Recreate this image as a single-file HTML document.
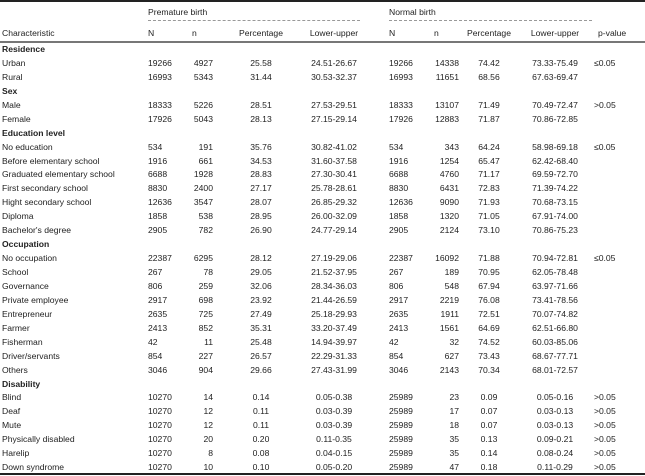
<!DOCTYPE html>
<html><head><meta charset="utf-8"><style>
body{margin:0;width:645px;height:476px;background:#fff;font-family:"Liberation Sans",sans-serif;font-size:8.6px;color:#222;position:relative;overflow:hidden}
.top{position:absolute;left:0;top:0;width:645px;height:2px;background:#222}
.bot{position:absolute;left:0;top:473px;width:645px;height:2px;background:#222}
.hl{position:absolute;left:0;top:41px;width:645px;height:2px;background:#777}
.g{position:absolute;top:7px}
.d{position:absolute;top:20px;height:0;border-top:1px dashed #999}
table{position:absolute;left:0;border-collapse:collapse;table-layout:fixed;width:645px}
td{padding:0;height:13.93px;line-height:13.93px;white-space:nowrap;overflow:visible}
td:nth-child(1){padding-left:2px}
td:nth-child(2){padding-left:2px}
td:nth-child(3){text-align:right;padding-right:3px}
td:nth-child(4),td:nth-child(5),td:nth-child(8),td:nth-child(9){text-align:center}
td:nth-child(6){padding-left:27px}
td:nth-child(7){text-align:right;padding-right:2px}
td:nth-child(10){padding-left:1px}
tr.s td{font-weight:bold}
</style></head><body>
<div class="top"></div>
<div class="g" style="left:148px">Premature birth</div>
<div class="g" style="left:389px">Normal birth</div>
<div class="d" style="left:148px;width:212px"></div>
<div class="d" style="left:389px;width:203px"></div>
<table style="top:27px"><colgroup><col style="width:146px"><col style="width:40px"><col style="width:30px"><col style="width:90px"><col style="width:56px"><col style="width:64px"><col style="width:35px"><col style="width:56px"><col style="width:76px"><col style="width:52px"></colgroup>
<tr><td>Characteristic</td><td>N</td><td style="text-align:left;padding-left:6px">n</td><td>Percentage</td><td>Lower-upper</td><td>N</td><td style="text-align:left;padding-left:8px">n</td><td>Percentage</td><td>Lower-upper</td><td style="padding-left:5px">p-value</td></tr></table>
<div class="hl"></div>
<table style="top:43px"><colgroup><col style="width:146px"><col style="width:40px"><col style="width:30px"><col style="width:90px"><col style="width:56px"><col style="width:64px"><col style="width:35px"><col style="width:56px"><col style="width:76px"><col style="width:52px"></colgroup>
<tr class="s"><td>Residence</td><td></td><td></td><td></td><td></td><td></td><td></td><td></td><td></td><td></td></tr>
<tr><td>Urban</td><td>19266</td><td>4927</td><td>25.58</td><td>24.51-26.67</td><td>19266</td><td>14338</td><td>74.42</td><td>73.33-75.49</td><td>≤0.05</td></tr>
<tr><td>Rural</td><td>16993</td><td>5343</td><td>31.44</td><td>30.53-32.37</td><td>16993</td><td>11651</td><td>68.56</td><td>67.63-69.47</td><td></td></tr>
<tr class="s"><td>Sex</td><td></td><td></td><td></td><td></td><td></td><td></td><td></td><td></td><td></td></tr>
<tr><td>Male</td><td>18333</td><td>5226</td><td>28.51</td><td>27.53-29.51</td><td>18333</td><td>13107</td><td>71.49</td><td>70.49-72.47</td><td>&gt;0.05</td></tr>
<tr><td>Female</td><td>17926</td><td>5043</td><td>28.13</td><td>27.15-29.14</td><td>17926</td><td>12883</td><td>71.87</td><td>70.86-72.85</td><td></td></tr>
<tr class="s"><td>Education level</td><td></td><td></td><td></td><td></td><td></td><td></td><td></td><td></td><td></td></tr>
<tr><td>No education</td><td>534</td><td>191</td><td>35.76</td><td>30.82-41.02</td><td>534</td><td>343</td><td>64.24</td><td>58.98-69.18</td><td>≤0.05</td></tr>
<tr><td>Before elementary school</td><td>1916</td><td>661</td><td>34.53</td><td>31.60-37.58</td><td>1916</td><td>1254</td><td>65.47</td><td>62.42-68.40</td><td></td></tr>
<tr><td>Graduated elementary school</td><td>6688</td><td>1928</td><td>28.83</td><td>27.30-30.41</td><td>6688</td><td>4760</td><td>71.17</td><td>69.59-72.70</td><td></td></tr>
<tr><td>First secondary school</td><td>8830</td><td>2400</td><td>27.17</td><td>25.78-28.61</td><td>8830</td><td>6431</td><td>72.83</td><td>71.39-74.22</td><td></td></tr>
<tr><td>Hight secondary school</td><td>12636</td><td>3547</td><td>28.07</td><td>26.85-29.32</td><td>12636</td><td>9090</td><td>71.93</td><td>70.68-73.15</td><td></td></tr>
<tr><td>Diploma</td><td>1858</td><td>538</td><td>28.95</td><td>26.00-32.09</td><td>1858</td><td>1320</td><td>71.05</td><td>67.91-74.00</td><td></td></tr>
<tr><td>Bachelor's degree</td><td>2905</td><td>782</td><td>26.90</td><td>24.77-29.14</td><td>2905</td><td>2124</td><td>73.10</td><td>70.86-75.23</td><td></td></tr>
<tr class="s"><td>Occupation</td><td></td><td></td><td></td><td></td><td></td><td></td><td></td><td></td><td></td></tr>
<tr><td>No occupation</td><td>22387</td><td>6295</td><td>28.12</td><td>27.19-29.06</td><td>22387</td><td>16092</td><td>71.88</td><td>70.94-72.81</td><td>≤0.05</td></tr>
<tr><td>School</td><td>267</td><td>78</td><td>29.05</td><td>21.52-37.95</td><td>267</td><td>189</td><td>70.95</td><td>62.05-78.48</td><td></td></tr>
<tr><td>Governance</td><td>806</td><td>259</td><td>32.06</td><td>28.34-36.03</td><td>806</td><td>548</td><td>67.94</td><td>63.97-71.66</td><td></td></tr>
<tr><td>Private employee</td><td>2917</td><td>698</td><td>23.92</td><td>21.44-26.59</td><td>2917</td><td>2219</td><td>76.08</td><td>73.41-78.56</td><td></td></tr>
<tr><td>Entrepreneur</td><td>2635</td><td>725</td><td>27.49</td><td>25.18-29.93</td><td>2635</td><td>1911</td><td>72.51</td><td>70.07-74.82</td><td></td></tr>
<tr><td>Farmer</td><td>2413</td><td>852</td><td>35.31</td><td>33.20-37.49</td><td>2413</td><td>1561</td><td>64.69</td><td>62.51-66.80</td><td></td></tr>
<tr><td>Fisherman</td><td>42</td><td>11</td><td>25.48</td><td>14.94-39.97</td><td>42</td><td>32</td><td>74.52</td><td>60.03-85.06</td><td></td></tr>
<tr><td>Driver/servants</td><td>854</td><td>227</td><td>26.57</td><td>22.29-31.33</td><td>854</td><td>627</td><td>73.43</td><td>68.67-77.71</td><td></td></tr>
<tr><td>Others</td><td>3046</td><td>904</td><td>29.66</td><td>27.43-31.99</td><td>3046</td><td>2143</td><td>70.34</td><td>68.01-72.57</td><td></td></tr>
<tr class="s"><td>Disability</td><td></td><td></td><td></td><td></td><td></td><td></td><td></td><td></td><td></td></tr>
<tr><td>Blind</td><td>10270</td><td>14</td><td>0.14</td><td>0.05-0.38</td><td>25989</td><td>23</td><td>0.09</td><td>0.05-0.16</td><td>&gt;0.05</td></tr>
<tr><td>Deaf</td><td>10270</td><td>12</td><td>0.11</td><td>0.03-0.39</td><td>25989</td><td>17</td><td>0.07</td><td>0.03-0.13</td><td>&gt;0.05</td></tr>
<tr><td>Mute</td><td>10270</td><td>12</td><td>0.11</td><td>0.03-0.39</td><td>25989</td><td>18</td><td>0.07</td><td>0.03-0.13</td><td>&gt;0.05</td></tr>
<tr><td>Physically disabled</td><td>10270</td><td>20</td><td>0.20</td><td>0.11-0.35</td><td>25989</td><td>35</td><td>0.13</td><td>0.09-0.21</td><td>&gt;0.05</td></tr>
<tr><td>Harelip</td><td>10270</td><td>8</td><td>0.08</td><td>0.04-0.15</td><td>25989</td><td>35</td><td>0.14</td><td>0.08-0.24</td><td>&gt;0.05</td></tr>
<tr><td>Down syndrome</td><td>10270</td><td>10</td><td>0.10</td><td>0.05-0.20</td><td>25989</td><td>47</td><td>0.18</td><td>0.11-0.29</td><td>&gt;0.05</td></tr>
</table>
<div class="bot"></div>
</body></html>
